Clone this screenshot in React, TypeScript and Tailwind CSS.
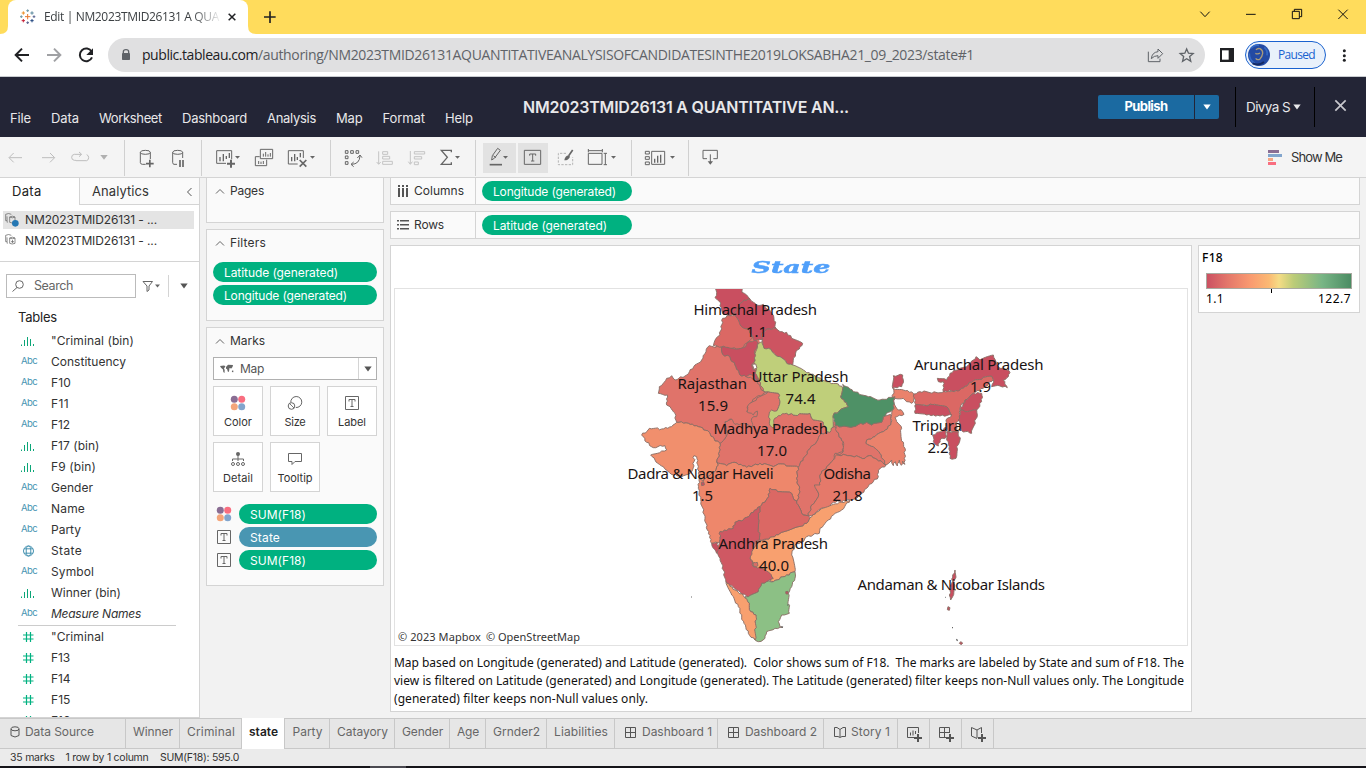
import React, { useLayoutEffect, useRef, useState } from "react";

type Kids = { children?: React.ReactNode };

/* Text set to a given width through letter spacing */
function Fit({ w, c = "", children }: { w: number; c?: string; children: string }) {
  const ref = useRef<HTMLSpanElement>(null);
  const [ls, setLs] = useState(0);
  useLayoutEffect(() => {
    const el = ref.current;
    if (!el) return;
    setLs((w - el.getBoundingClientRect().width) / children.length);
  }, []);
  return (
    <span ref={ref} className={"inline-block shrink-0 whitespace-pre " + c} style={{ letterSpacing: ls }}>
      {children}
    </span>
  );
}

/* Icon window drawn on a grid three times finer than the pixel grid */
function Ico({ x, y, w, h, c = "", ox = 0, oy = 0, children }: Kids & { x: number; y: number; w: number; h: number; c?: string; ox?: number; oy?: number }) {
  return (
    <svg width={w} height={h} viewBox={`${x * 3} ${y * 3} ${w * 3} ${h * 3}`} className={"block shrink-0 " + c} fill="none" stroke="#666" strokeWidth="3">
      <g transform={`translate(${ox * 3} ${oy * 3})`}>{children}</g>
    </svg>
  );
}

const Caret = ({ c = "" }: { c?: string }) => (
  <svg width="8" height="6" viewBox="0 0 8 6" className={"shrink-0 " + c} fill="currentColor"><path d="M0.3 0.5h7.400L4 5.500z" /></svg>
);

function Tool({ x, w, o = false, c = "", children }: Kids & { x: number; w: number; o?: boolean; c?: string }) {
  return <Ico x={x} y={137} w={w} h={40} c={c} ox={o ? 400 : 0} oy={o ? 75 : 0}>{children}</Ico>;
}

/* ---------- Browser frame ---------- */
const sparkle: [number, number, number, string][] = [
  [83, 50, 8, "#e8762d"], [70, 39, 5, "#eb9129"], [96, 39, 5, "#59879b"], [70, 62, 5, "#c72037"], [96, 62, 5, "#1f447e"],
  [83, 32, 4, "#7199a6"], [83, 68, 4, "#5b6591"], [64, 50, 4, "#7199a6"], [102, 50, 4, "#5b6591"],
];

function Browser() {
  return (
    <div className="font-['Open_Sans','Noto_Sans',sans-serif]">
      <div className="flex h-[34px] bg-[#ffdc5c]">
        <Ico x={0} y={26} w={8} h={8} c="mt-[26px]"><path d="M0 102H24V78Q24 102 0 102Z" fill="#fff" stroke="none" /></Ico>
        <div className="flex w-60 items-center rounded-t-lg bg-white">
          <Ico x={19} y={8} w={18} h={18} c="ml-[11px]">
            {sparkle.map(([x, y, r, k], i) => <path key={i} d={`M${x - r} ${y}h${2 * r}M${x} ${y - r}v${2 * r}`} stroke={k} />)}
          </Ico>
          <span className="ml-[7px] w-[176px] overflow-hidden text-xs text-[#3c4043] [mask-image:linear-gradient(90deg,#000_148px,transparent_178px)]">
            <Fit w={175}>Edit | NM2023TMID26131 A QUA</Fit>
          </span>
          <Ico x={226} y={11} w={12} h={12} c="ml-[6px]"><path d="M686 41l20 20M706 41l-20 20" stroke="#202124" strokeWidth="4.500" /></Ico>
        </div>
        <Ico x={248} y={26} w={8} h={8} c="mt-[26px]"><path d="M768 102H744V78Q744 102 768 102Z" fill="#fff" stroke="none" /></Ico>
        <Ico x={262} y={9} w={16} h={16} c="ml-[6px] mt-[9px]"><path d="M792 51h35M810 34v35" stroke="#222" strokeWidth="5" /></Ico>
        <Ico x={1190} y={0} w={176} h={34} c="ml-auto" ox={966}>
          <path d="M703 35l14 15 14-15M840 43h29M985 34V28h22v22h-6M979 34h21v22h-21zM1117 29l28 28M1145 29l-28 28" stroke="#111" />
        </Ico>
      </div>
      <div className="flex h-[43px] items-center border-b border-[#c9ccd0] bg-white">
        <Ico x={0} y={34} w={108} h={42}>
          <path d="M87 165H47M66 146L47 165l19 19" stroke="#202124" strokeWidth="6" />
          <path d="M141 165h40M162 146l19 19-19 19" stroke="#a0a1a4" strokeWidth="6" />
          <path d="M275 155A19 19 0 1 0 276 172" stroke="#202124" strokeWidth="6" /><path d="M279 145v20h-20z" fill="#202124" stroke="none" />
        </Ico>
        <div className="flex h-[34px] w-[1097px] items-center rounded-full bg-[#e0e0e1]">
          <Ico x={120} y={46} w={12} h={18} c="ml-3"><rect x="366" y="159" width="24" height="21" rx="2" fill="#5f6368" stroke="none" /><path d="M370 159v-4q0-6 8-6t8 6v4" stroke="#5f6368" strokeWidth="4" /></Ico>
          <span className="-mt-px ml-[10px] flex text-[14px]">
            <Fit w={116} c="text-[#202124]">public.tableau.com</Fit>
            <Fit w={716} c="text-[#5f6368]">/authoring/NM2023TMID26131AQUANTITATIVEANALYSISOFCANDIDATESINTHE2019LOKSABHA21_09_2023/state#1</Fit>
          </span>
          <Ico x={1145} y={38} w={52} h={34} c="ml-auto mr-2" ox={966}>
            <path d="M547 155v30h35v-9M590 161l-14-14v8q-18 2-20 21 8-9 20-9v8z" stroke="#5f6368" />
            <path d="M662 147l5.500 12.500 14 1.200-10.500 9 3.300 14-12.300-7.500-12.300 7.500 3.300-14-10.500-9 14-1.200z" stroke="#5f6368" strokeWidth="4" />
          </Ico>
        </div>
        <Ico x={1220} y={47} w={15} h={16} c="ml-[15px]" ox={966}><path d="M764 146h38v38h-38z" fill="#202124" stroke="#202124" strokeWidth="4" /><path d="M768 151h20v28h-20z" fill="#fff" stroke="none" /></Ico>
        <div className="ml-[10px] flex h-7 w-[81px] items-center rounded-full border border-[#1a62cf] bg-[#e9f1fb]">
          <Ico x={1247} y={43} w={24} h={24} c="ml-px" ox={966}>
            <circle cx="879" cy="165" r="33" fill="#234aa3" stroke="none" />
            <path d="M855 145q10-12 24-9M850 160q-1 18 16 30M895 142q11 10 8 24" stroke="#356bc6" strokeWidth="5" />
            <path d="M870 150q4-6 12-4 9 5 8 14t-9 18q-8 3-12-3M868 160q8 4 14-1" stroke="#a99b7b" strokeWidth="4" />
            <path d="M860 190q18 8 34-4" stroke="#142a63" strokeWidth="6" />
          </Ico>
          <Fit w={37} c="ml-[7px] text-xs text-[#1a62cf]">Paused</Fit>
        </div>
        <Ico x={1340} y={47} w={10} h={16} c="ml-[14px]" ox={966}><g fill="#202124" stroke="none"><circle cx="1135" cy="152" r="4.500" /><circle cx="1135" cy="167" r="4.500" /><circle cx="1135" cy="181" r="4.500" /></g></Ico>
      </div>
    </div>
  );
}

/* ---------- Tableau header ---------- */
const menus: [string, number][] = [["File", 21], ["Data", 28], ["Worksheet", 63], ["Dashboard", 65], ["Analysis", 49], ["Map", 26.5], ["Format", 42.5], ["Help", 28]];

function Header() {
  return (
    <div className="flex h-[60px] bg-[#232536] text-[#e8e8ea]">
      <div className="ml-[10px] mt-[33px] flex h-[18px] w-[463px] items-center gap-5 text-[13px]">
        {menus.map(([t, w]) => <Fit key={t} w={w}>{t}</Fit>)}
      </div>
      <Fit w={326} c="ml-[50px] mt-[18px] text-[16px] leading-6 font-semibold">NM2023TMID26131 A QUANTITATIVE AN...</Fit>
      <div className="ml-auto mt-[18px] flex h-6 w-[121px] overflow-hidden rounded-xs font-bold text-white">
        <div className="flex w-24 items-center justify-center bg-[#1b6aa1] text-[13px]"><Fit w={43}>Publish</Fit></div>
        <div className="ml-px flex w-6 items-center justify-center bg-[#1b6aa1]"><Caret /></div>
      </div>
      <div className="ml-4 mt-[10px] flex h-10 w-20 items-center border-x border-black pl-[10px] text-[13.500px]">
        <Fit w={44}>Divya S</Fit><Caret c="ml-[3px]" />
      </div>
      <Ico x={1334} y={98} w={14} h={15} c="ml-[19px] mr-[18px] mt-[21px]" ox={966}><path d="M1108 301l31 31M1139 301l-31 31" stroke="#c8c8cd" strokeWidth="5" /></Ico>
    </div>
  );
}

/* ---------- Toolbar ---------- */
const Sep = () => <div className="mt-[3px] h-9 w-px shrink-0 bg-[#d0d0d0]" />;

function Toolbar() {
  return (
    <div className="flex h-[41px] border-b border-[#d4d4d4] bg-[#f4f4f4]">
      <Tool x={0} w={124}>
        <path d="M66 473H28M41 459l-14 14 14 14M126 473h37M150 459l14 14-14 14M243 463h-20q-8 1-8 9t8 9h5M228 482h32q6-2 6-9t-6-9M237 456l8 7-8 7" stroke="#bdbdbd" />
        <path d="M301 465h22l-11 14z" fill="#b0b0b0" stroke="none" />
      </Tool>
      <Sep />
      <Tool x={125} w={76}>
        <path d="M437 493h-10q-6-1-6-5v-31M451 457v20" /><ellipse cx="436" cy="457" rx="15" ry="6" /><path d="M438 491h23M449.500 479v23" strokeWidth="5" />
        <path d="M531 493h-9q-4-1-4-5v-31M548 457v17" /><ellipse cx="533" cy="457" rx="15" ry="6" /><path d="M540 480v21M549 480v21" strokeWidth="5" />
      </Tool>
      <Sep />
      <Tool x={202} w={128}>
        <path d="M678 490h-28v-38h45v26" /><path d="M660 484v-13M670 484v-22M679 477v-9M688 474v-15" strokeWidth="4" /><path d="M681 491h24M693 479v24" strokeWidth="6" /><path d="M705 468h15l-7.500 8z" fill="#666" stroke="none" />
        <path d="M781 448h37v28h-37zM779 470h-13v27h34v-18" /><path d="M790 470v-9M797 470v-14M804 470v-7M811 470v-11M776 492v-9M783 492v-7M790 492v-9" />
        <path d="M893 492h-28v-40h45v22" /><path d="M875 484v-13M884 484v-22M892 480v-9M901 472v-13" strokeWidth="4" /><path d="M899 480l20 20M919 480l-20 20" strokeWidth="5" /><path d="M930 468h15l-7.500 8z" fill="#666" stroke="none" />
      </Tool>
      <Sep />
      <Tool x={331} w={144}>
        <path d="M1036 452h8v8h-8zM1052 452h8v8h-8zM1068 452h8v8h-8zM1036 468h8v8h-8zM1036 485h8v8h-8zM1054 493q25 0 26-26M1072 474l8-9 6 8M1061 486l-8 7 8 7" />
        <g stroke="#c4c4c4"><path d="M1136 454v38M1130 486l6 7 6-7M1148 455h15v8h-15zM1148 469h21v8h-21zM1148 484h29v9h-29z" /></g>
        <g transform="translate(1200 225)"><path d="M31 228v38M25 260l6 8 6-8M43 230h31v7H43zM43 245h22v7H43zM43 261h12v8H43z" stroke="#c4c4c4" />
          <path d="M154 232v-6h-30l18 21-18 21h30v-6" strokeWidth="4" /><path d="M165 243h15l-7.500 8z" fill="#666" stroke="none" /></g>
      </Tool>
      <Sep />
      <Tool x={476} w={155} o>
        <path d="M249 204h99v90h-99zM354 204h90v90h-90z" fill="#e2e2e2" stroke="none" />
        <path d="M275 255l2-13 16-22 8 6-17 23zM280 242l8 6" /><path d="M269 269h37" strokeWidth="5" /><path d="M309 243h15l-7.500 8z" fill="#666" stroke="none" />
        <path d="M373 226h49v42h-49zM389 242v-5h18v5M398 237v21M393 258h10" />
        <path d="M498 235h-23v34h43v-23" stroke="#b4b4b4" strokeDasharray="7 4" /><path d="M518 225l-12 17" strokeWidth="5" /><path d="M506 241q-11 2-13 15 13 0 17-11z" fill="#666" stroke="none" />
        <path d="M565 235h41v33h-41zM565 227h42M565 222v10M607 222v10M616 235v34M611 235h10M611 269h10" /><path d="M633 243h15l-7.500 8z" fill="#666" stroke="none" />
      </Tool>
      <Sep />
      <Tool x={632} w={56} o>
        <path d="M736 229h12v8h-12zM736 245h12v8h-12zM736 261h12v8h-12zM755 229h39v39h-39z" /><path d="M764 263v-12M773 263v-21M782 263v-24" strokeWidth="4" /><path d="M810 243h15l-7.500 8z" fill="#666" stroke="none" />
      </Tool>
      <Sep />
      <Tool x={689} w={40} o><path d="M921 251h-12v-25h43v25h-12M931 238v28" /><path d="M923 259h16l-8 10z" fill="#666" stroke="none" /></Tool>
      <div className="ml-auto mr-[24px] flex items-center">
        <Ico x={1268} y={147} w={16} h={20} ox={966}>
          <g stroke="none"><path d="M906 450h33v9h-33z" fill="#8a6d93" /><path d="M906 462h42v9h-42z" fill="#82a5cd" /><path d="M906 474h15v9h-15z" fill="#f4a582" /><path d="M906 486h24v9h-24z" fill="#f96e80" /></g>
        </Ico>
        <Fit w={51} c="ml-[7px] mt-[2px] text-[13px] text-[#333]">Show Me</Fit>
      </div>
    </div>
  );
}

/* ---------- Data pane ---------- */
const fields: [string, string, number][] = [
  ["b", '"Criminal (bin)', 83], ["a", "Constituency", 75], ["a", "F10", 20], ["a", "F11", 18], ["a", "F12", 19], ["b", "F17 (bin)", 48.5], ["b", "F9 (bin)", 45],
  ["a", "Gender", 42], ["a", "Name", 34], ["a", "Party", 30], ["g", "State", 31], ["a", "Symbol", 43], ["b", "Winner (bin)", 70], ["a", "Measure Names", 90],
];
const measures: [string, number][] = [['"Criminal', 53], ["F13", 19], ["F14", 19.5], ["F15", 19.5], ["F16", 19.5]];

function FieldIcon({ k }: { k: string }) {
  if (k === "a") return <Fit w={16} c="text-[9.500px] text-[#4994b2]">Abc</Fit>;
  if (k === "b") return <svg width="16" height="12" viewBox="0 0 16 12" stroke="#0ca678" className="block"><path d="M.5 9.500v1.500M3.500 5v6M6.500 2v9M9.500 4v7M12.500 9v2" /></svg>;
  if (k === "g") return <svg width="16" height="12" viewBox="0 0 16 12" stroke="#4994b2" fill="none" className="block"><circle cx="7.500" cy="6" r="5" /><ellipse cx="7.500" cy="6" rx="2.300" ry="5" /><path d="M3 3.800h9M3 8.200h9" /></svg>;
  return <svg width="16" height="12" viewBox="0 0 16 12" stroke="#00b180" fill="none" className="block"><path d="M5.500 1v10M9.500 1v10M2 4h10.500M2 8h10.500" strokeWidth="1.200" /></svg>;
}

const Sheets = ({ dot = false }: { dot?: boolean }) => (
  <Ico x={5} y={dot ? 213 : 234} w={14} h={14} oy={175}>
    <g transform={dot ? "" : "translate(0 63)"}>
      <path d="M21 137h-4v-19q9-5 17 0M22 143q-1-1-1-19M29 126q8-5 16 0M29 126v16q7 4 16 0v-16q-8 5-16 0" strokeWidth="2.200" />
      {dot ? <circle cx="46" cy="145" r="10" fill="#2477b3" stroke="none" /> : <path d="M33 137h9M37.500 132v9" strokeWidth="2.200" />}
    </g>
  </Ico>
);

function DataPane() {
  return (
    <div className="h-[540px] w-[200px] shrink-0 overflow-hidden border-r border-b border-[#d4d4d4] bg-white text-xs text-[#333]">
      <div className="flex h-[27px] text-[13px]">
        <div className="flex w-[79px] items-center pl-3 pt-px text-[#222]"><Fit w={29.5}>Data</Fit></div>
        <div className="flex flex-1 items-center border-b border-l border-[#d4d4d4] bg-[#fafafa] pl-[12px] pt-px">
          <Fit w={57}>Analytics</Fit>
          <svg width="7" height="10" viewBox="0 0 7 10" className="ml-auto mr-[6px]" fill="none" stroke="#555"><path d="M5.500 1L1.500 5l4 4" /></svg>
        </div>
      </div>
      <div className="mt-[6px] h-[51px] border-b border-[#d4d4d4]">
        <div className="ml-[3px] flex h-[18px] w-[191px] items-center bg-[#e4e4e4] pl-[2px]"><Sheets dot /><Fit w={132} c="ml-[6px]">NM2023TMID26131 - ...</Fit></div>
        <div className="ml-[3px] mt-[3px] flex h-[18px] w-[191px] items-center pl-[2px]"><Sheets /><Fit w={132} c="ml-[6px]">NM2023TMID26131 - ...</Fit></div>
      </div>
      <div className="mt-3 flex h-6 items-center">
        <div className="ml-[6px] flex h-6 w-[130px] items-center border border-[#bbb] pl-[5px] text-[#666]">
          <svg width="12" height="12" viewBox="0 0 12 12" fill="none" stroke="#666"><circle cx="7.500" cy="4.500" r="3.800" /><path d="M5 7.500L.5 11.500" /></svg>
          <Fit w={39} c="ml-[10px] text-[12.500px]">Search</Fit>
        </div>
        <svg width="19" height="12" viewBox="0 0 19 12" fill="none" stroke="#666" className="ml-[6px]"><path d="M1 1.500h9.500L7 6v4l-2 1.500V6z" /><path d="M13 4.500h5l-2.500 3z" fill="#666" stroke="none" /></svg>
        <div className="ml-[7px] h-[22px] w-px bg-[#d4d4d4]" />
        <Caret c="ml-[11px] text-[#555]" />
      </div>
      <div className="mt-[10px] flex h-5 items-center pl-[18px] text-[13px] text-[#222]"><Fit w={39}>Tables</Fit></div>
      <div className="mt-[2px]">
        {fields.map(([k, t, w], i) => (
          <div key={t} className="flex h-[21px] items-center pl-[21px]">
            <div className="flex w-[30px] items-center"><FieldIcon k={k} /></div>
            <Fit w={w} c={i === 13 ? "italic" : ""}>{t}</Fit>
          </div>
        ))}
      </div>
      <div className="ml-[18px] w-[158px] border-b border-[#ccc] pt-px" />
      {measures.map(([t, w]) => (
        <div key={t} className="flex h-[21px] items-center pl-[21px]">
          <div className="flex w-[30px] items-center"><FieldIcon k="m" /></div>
          <Fit w={w}>{t}</Fit>
        </div>
      ))}
    </div>
  );
}

/* ---------- Shelves ---------- */
function Pill({ t, w, c }: { t: string; w: number; c: string }) {
  return <div className={"flex h-5 items-center rounded-full pl-[11px] pt-px text-xs text-white " + c}><Fit w={w}>{t}</Fit></div>;
}

function CardTitle({ t, w }: { t: string; w: number }) {
  return (
    <div className="flex h-[26px] items-center pl-2 text-[#333]">
      <svg width="10" height="7" viewBox="0 0 10 7" fill="none" stroke="#666"><path d="M1 5.500l4-4 4 4" /></svg>
      <Fit w={w} c="ml-[5px]">{t}</Fit>
    </div>
  );
}

const Dots = () => (
  <svg width="16" height="16" viewBox="0 0 16 16" className="block shrink-0"><circle cx="4.300" cy="4.300" r="3.500" fill="#8a6d93" /><circle cx="11.700" cy="4.300" r="3.500" fill="#f96e80" /><circle cx="4.300" cy="11.700" r="3.500" fill="#f4a57a" /><circle cx="11.700" cy="11.700" r="3.500" fill="#82a5cd" /></svg>
);
const Tee = () => (
  <svg width="16" height="16" viewBox="0 0 16 16" className="block shrink-0" fill="none" stroke="#666"><path d="M1.500 1.500h13v13h-13z" /><path d="M5 6.500v-2h6v2M8 4.500v7M6.500 11.500h3" /></svg>
);
const SizeIcon = () => (
  <svg width="16" height="16" viewBox="0 0 16 16" className="block" fill="none" stroke="#666"><path d="M3.800 7.500a5.500 5.500 0 1 1 5 5" /><circle cx="4.500" cy="11" r="3.300" /><path d="M2.500 8.500l4.500 4.500" strokeWidth=".9" /></svg>
);
const DetailIcon = () => (
  <svg width="16" height="16" viewBox="0 0 16 16" className="block" fill="none" stroke="#666"><circle cx="8" cy="3" r="2" fill="#666" stroke="none" /><path d="M8 4v6M2.500 10V8h11v2" /><circle cx="3" cy="13" r="1.500" /><circle cx="8" cy="13" r="1.500" /><circle cx="13" cy="13" r="1.500" /></svg>
);
const TipIcon = () => (
  <svg width="16" height="16" viewBox="0 0 16 16" className="block" fill="none" stroke="#666"><path d="M1.500 2.500h13v8H8l-3 3v-3H1.500z" /></svg>
);
const markButtons: [string, number, React.ReactNode][] = [
  ["Color", 28, <Dots />], ["Size", 21, <SizeIcon />], ["Label", 28, <Tee />], ["Detail", 30, <DetailIcon />], ["Tooltip", 35, <TipIcon />],
];

const card = "border border-[#d4d4d4] bg-[#fafafa] px-[6px]";

function Cards() {
  return (
    <div className="ml-[6px] w-[178px] shrink-0 text-xs">
      <div className={card + " h-[46px] !px-0"}><CardTitle t="Pages" w={34} /></div>
      <div className={card + " mt-[6px] h-[92px]"}>
        <div className="-mx-[6px]"><CardTitle t="Filters" w={36} /></div>
        <div className="mt-[6px] flex flex-col gap-[3px]">
          <Pill t="Latitude (generated)" w={114} c="bg-[#00b180]" />
          <Pill t="Longitude (generated)" w={123} c="bg-[#00b180]" />
        </div>
      </div>
      <div className={card + " mt-[6px] h-[259px]"}>
        <div className="-mx-[6px]"><CardTitle t="Marks" w={35} /></div>
        <div className="mt-[3px] flex h-[23px] items-center border border-[#b0b0b0] bg-white pl-[6px] text-[#555]">
          <svg width="14" height="10" viewBox="0 0 14 10" fill="#666"><path d="M0 2l4-.5 1.500.8L4 4.500l.7 1.500L4.500 9 3.300 8 3 5.500 1 3.800zM6 3l2-2.200L13 1l-.5 2-1.200 1.500L9.500 4 9 7.500 8 8 7 5 6 4.800zM12 6.500l1.500.2-.3 1.500-1.300-.3z" /></svg>
          <Fit w={24} c="ml-[6px]">Map</Fit>
          <div className="ml-auto flex h-full w-[18px] items-center justify-center border-l border-[#d4d4d4]"><Caret /></div>
        </div>
        <div className="mt-[6px] grid grid-cols-[50px_50px_50px] gap-x-[7px] gap-y-[6px]">
          {markButtons.map(([t, w, icon]) => (
            <div key={t} className="flex h-[50px] flex-col items-center border border-[#d4d4d4] bg-white pt-2 text-[11px] text-[#333]">
              {icon}<Fit w={w} c="mt-[3px] leading-4">{t}</Fit>
            </div>
          ))}
        </div>
        <div className="mt-3 flex flex-col gap-[3px]">
          {([["SUM(F18)", 56, "flex-1 bg-[#00b180]"], ["State", 30, "flex-1 bg-[#4996b2]"], ["SUM(F18)", 56, "flex-1 bg-[#00b180]"]] as [string, number, string][]).map(([t, w, c], i) => (
            <div key={i} className="flex items-center pl-[3px]">
              {i ? <Tee /> : <Dots />}
              <div className="ml-[7px] flex flex-1"><Pill t={t} w={w} c={c} /></div>
            </div>
          ))}
        </div>
      </div>
    </div>
  );
}

function Shelf({ t, w, pill, pw, rows = false }: { t: string; w: number; pill: string; pw: number; rows?: boolean }) {
  return (
    <div className="flex h-[28px] border border-[#d4d4d4] bg-[#fafafa] text-xs">
      <div className="flex w-[85px] items-center border-r border-[#d4d4d4] pl-[6px] text-[#333]">
        <svg width="12" height="12" viewBox="0 0 12 12" fill="#555">
          {rows ? <path d="M0 1h2v1.500H0zM3 1h9v1.500H3zM0 5h2v1.500H0zM3 5h9v1.500H3zM0 9h2v1.500H0zM3 9h9v1.500H3z" /> : <path d="M1 0h2v2H1zM1 3h2v9H1zM5 0h2v2H5zM5 3h2v9H5zM9 0h2v2H9zM9 3h2v9H9z" />}
        </svg>
        <Fit w={w} c="ml-[5px]">{t}</Fit>
      </div>
      <div className="ml-[6px] mt-[3px]"><Pill t={pill} w={pw} c="w-[150px] bg-[#00b180]" /></div>
    </div>
  );
}

/* ---------- Map ---------- */
const R = "#c94f60", S = "#e0736a", D = "#db6864", O = "#f8a06f";
const interior = "345,100 415,150 425,200 425,300 460,380 640,410 800,400 760,450 745,470 785,525 640,640 560,700 520,740 500,850 450,870 402,1000 380,930 325,860 255,600 240,545 290,490 200,420 165,380 165,300 210,285 270,200 300,170";
const states: [string, string][] = [
  [S, "445,320 475,325 480,350 470,378 500,385 520,390 570,385 575,400 610,412 622,440 600,450 590,470 570,490 550,520 535,547 475,537 460,545 420,535 380,547 345,532 320,542 290,530 298,500 300,475 318,455 322,440 315,415 335,402 370,415 385,405 380,360"],
  [S, "268,182 305,187 308,208 330,215 345,240 360,270 378,275 412,285 412,295 430,318 445,320 410,335 385,360 380,380 400,390 412,378 410,395 395,400 398,425 370,415 345,418 335,402 315,410 320,440 315,460 300,475 285,468 268,442 235,425 205,415 170,412 165,385 150,365 140,360 142,330 115,325 118,305 140,280 155,272 165,285 200,270 225,240 245,225 258,200"],
  [D, "345,90 358,108 365,125 385,132 398,155 385,170 365,190 355,192 305,185 280,182 288,160 300,150 308,100 330,92"],
  [R, "283,8 290,22 285,38 300,50 300,62 310,88 345,90 358,60 372,45 390,42 380,30 366,22 368,8"],
  [R, "372,45 390,42 410,60 430,58 455,85 462,100 468,130 440,132 425,145 427,165 405,168 395,150 385,130 365,125 355,105 345,90 358,60"],
  [R, "305,187 355,192 370,188 388,170 405,165 414,172 405,195 405,230 395,240 400,255 412,262 415,285 390,268 378,275 360,270 345,240 330,215 308,208"],
  ["#cd5461", "427,165 425,145 440,132 468,130 480,140 500,142 515,160 548,175 528,200 518,240 500,235 480,215 462,205 445,190 432,190"],
  ["#f18f6d", "170,412 205,415 235,425 268,442 285,468 300,475 298,500 290,530 295,540 285,560 262,575 250,590 238,580 235,545 230,515 222,512 222,530 215,560 185,575 160,570 130,545 105,525 92,510 112,505 140,495 135,482 100,488 80,472 65,450 88,430 125,432 155,425"],
  ["#ee876b", "238,580 250,590 262,575 285,560 295,540 290,530 320,542 345,532 380,547 420,535 460,545 475,537 535,547 530,580 540,620 530,655 515,625 480,620 450,610 442,640 425,660 420,665 390,690 370,705 345,712 340,730 300,740 300,770 275,775 262,735 255,700 243,650 235,610"],
  [S, "645,425 650,440 670,470 668,500 645,505 640,525 620,545 600,570 600,600 590,615 595,635 575,660 565,693 545,685 530,655 540,620 530,580 535,547 550,520 570,490 590,470 600,450 622,440"],
  [S, "645,420 665,425 700,425 740,412 755,420 785,412 790,395 812,388 812,420 790,440 765,455 740,465 738,475 760,485 780,505 798,540 765,520 748,512 735,520 690,512 650,510 670,500 670,470 650,440"],
  ["#e5796a", "650,510 690,512 735,520 748,512 765,520 798,540 775,555 775,575 760,590 740,610 715,635 690,645 640,652 630,665 600,672 575,692 565,693 575,660 595,635 590,615 583,600 600,600 600,570 620,545 640,525"],
  ["#ea826c", "820,310 850,315 880,325 885,335 875,355 860,350 850,340 825,340 822,355 830,370 848,380 852,388 825,397 835,415 845,430 843,455 855,490 855,538 848,528 844,541 838,525 832,543 826,530 820,542 815,525 798,540 780,505 760,485 738,475 740,465 765,455 790,440 812,420 815,388 822,370 818,345"],
  [O, "418,768 440,762 480,745 525,728 560,715 570,698 600,675 640,658 690,645 665,675 640,690 625,705 600,730 598,745 560,755 550,770 525,780 515,810 525,860 500,870 460,890 450,888 458,878 430,855 400,845 390,810 405,785"],
  [D, "450,610 480,620 515,625 530,655 545,685 570,698 560,715 525,728 480,745 440,762 418,765 415,700 420,665 425,660 442,640"],
  ["#cf5863", "420,665 415,700 418,765 405,770 395,800 390,820 400,845 425,850 450,865 460,880 440,890 425,895 415,920 385,935 350,915 318,890 310,855 300,820 290,800 298,770 300,740 340,730 345,712 370,705 390,690"],
  [R, "275,775 292,772 298,790 290,805 280,790"],
  ["#8cc085", "525,860 525,880 515,905 505,925 508,985 485,990 475,1010 480,1025 488,1027 465,1030 440,1040 435,1060 415,1070 402,1060 408,990 392,980 388,955 375,935 385,935 415,920 425,895 440,890 460,890 500,870"],
  [O, "318,890 345,915 370,932 388,955 392,980 408,990 405,1065 385,1045 372,1015 355,965 335,930"],
  ["#bfcf7a", "412,180 425,170 432,190 445,190 462,205 480,215 500,235 518,240 550,255 590,275 620,290 655,297 668,310 662,335 685,365 660,375 640,390 640,420 630,442 620,440 610,412 575,400 570,385 520,390 500,385 475,392 464,400 460,430 448,415 447,390 455,375 470,378 480,350 475,325 445,320 430,318 410,270 405,240 405,205"],
  ["#4e9166", "668,298 690,312 700,320 745,335 780,345 825,335 818,375 790,395 785,412 755,420 740,412 700,425 665,425 645,420 640,390 660,375 685,365 662,335 668,310"],
  [R, "820,272 848,270 850,285 845,305 818,310"],
  [D, "882,327 900,320 960,323 1020,315 1060,287 1115,273 1120,283 1090,310 1060,325 1035,345 1020,370 1018,405 1005,415 1015,440 985,440 978,405 995,390 980,365 950,360 900,360 885,365"],
  [R, "970,290 955,290 952,280 980,285 990,265 1020,250 1045,240 1060,225 1068,215 1080,225 1120,210 1128,230 1135,245 1160,255 1170,263 1165,275 1150,285 1162,308 1140,303 1115,305 1120,283 1115,273 1060,287 1020,315 970,320"],
  [R, "885,360 950,360 980,365 995,390 960,393 920,390 885,385"],
  [R, "1022,375 1035,345 1060,325 1085,325 1085,350 1070,375 1035,380"],
  [R, "1022,375 1035,380 1070,375 1072,390 1055,445 1025,437 1015,405"],
  [R, "980,440 1015,440 1020,465 1010,485 1008,520 990,520 988,485 980,465"],
  [R, "938,450 965,440 978,427 980,455 960,465 955,483 940,470"],
  [R, "1005,855 1007,870 1002,895 998,935 992,945 988,930 995,895 998,870"],
  [R, "984,965 990,968 988,976 982,974"],
  [R, "1022,1070 1028,1074 1024,1079 1018,1075"],
  [R, "244,592 252,592 253,600 245,602"],
  ["#d96d67", "400,832 412,832 414,842 402,845"],
  [R, "497,920 504,919 504,927 498,927"],
];

/* Coastlines and borders gain detail through seeded midpoint displacement;
   the seed depends on the end points only, so neighbours share a border. */
function rough(src: string): string {
  const pts = src.split(" ").map((p) => p.split(",").map(Number));
  const out: string[] = [];
  pts.forEach((a, i) => {
    const b = pts[(i + 1) % pts.length];
    const dx = b[0] - a[0], dy = b[1] - a[1], len = Math.hypot(dx, dy);
    out.push(a.join(","));
    const n = Math.floor(len / 6);
    const flip = a[0] * 3 + a[1] > b[0] * 3 + b[1];
    const sgn = flip ? -1 : 1;
    for (let j = 1; j < n; j++) {
      const k = flip ? n - j : j;
      const h = Math.sin((a[0] + b[0]) * 12.9 + (a[1] + b[1]) * 78.2 + k * 37.7) * 43758.5;
      const r = (h - Math.floor(h) - 0.5) * 6 * sgn;
      out.push(`${(a[0] + (dx * j) / n - (dy / len) * r).toFixed(1)},${(a[1] + (dy * j) / n + (dx / len) * r).toFixed(1)}`);
    }
  });
  return out.join(" ");
}

const labels: [string, number, number, number][] = [
  ["Himachal Pradesh", 693.5, 315, 123.5], ["1.1", 746, 337, 21], ["Rajasthan", 677.5, 389, 69.5], ["15.9", 698, 411, 30], ["Uttar Pradesh", 751.5, 382, 97],
  ["74.4", 785.5, 404, 30], ["Madhya Pradesh", 713.5, 434, 114.5], ["17.0", 757, 456, 30], ["Dadra & Nagar Haveli", 627.5, 479, 146], ["1.5", 692, 501, 21],
  ["Odisha", 823.5, 479, 47.5], ["21.8", 832.5, 501, 30], ["Andhra Pradesh", 718.5, 549, 109.5], ["40.0", 759, 571, 30], ["Arunachal Pradesh", 914, 370, 129.5],
  ["1.9", 970, 392, 21], ["Tripura", 912.500, 431, 49.5], ["2.2", 927.5, 453, 21], ["Andaman & Nicobar Islands", 857.5, 590, 187.5],
];

function MapView() {
  return (
    <svg width="792" height="356" viewBox="395 289 792 356" className="block">
      <g transform="translate(620 285) scale(.33333)" stroke="#8b6f66" strokeWidth="2.800" strokeLinejoin="round">
        <polygon points={interior} fill={S} stroke="none" />
        {states.map(([f, p], i) => <polygon key={i} points={rough(p)} fill={f} />)}
        <path d="M397 238l10-1 4 12-9 4z" fill="#fff" />
        <path d="M214 936h2M502 960h3M484 1025l5 2M1003 912l4 4M975 937h2M996 1028h3M1009 1063l4 4" stroke="#666" strokeWidth="4" />
      </g>
      <g fill="#1a1313" className="font-['Noto_Sans',sans-serif] text-[15px]">
        {labels.map(([t, x, y, w]) => <text key={t} x={x} y={y} textLength={w}>{t}</text>)}
      </g>
    </svg>
  );
}

function View() {
  return (
    <div className="h-[467px] w-[802px] border border-[#d4d4d4] bg-white px-[3px] font-['Noto_Sans',sans-serif] text-[#111]">
      <div className="flex h-[42px] items-center justify-center">
        <span className="mt-px inline-block scale-x-[1.58] font-['DejaVu_Serif',serif] text-[17px] font-bold italic text-[#4f9ffa] [-webkit-text-stroke:0.5px_#4f9ffa]">State</span>
      </div>
      <div className="relative h-[358px] border border-[#e2e2e2]">
        <MapView />
        <div className="absolute bottom-0 left-[3px] flex gap-[5px] text-[11px] text-[#333]"><Fit w={83}>© 2023 Mapbox</Fit><Fit w={94}>© OpenStreetMap</Fit></div>
      </div>
      <div className="mt-2 flex flex-col text-xs leading-[18px]">
        <Fit w={790} c="self-start">{"Map based on Longitude (generated) and Latitude (generated).  Color shows sum of F18.  The marks are labeled by State and sum of F18. The"}</Fit>
        <Fit w={790} c="self-start">view is filtered on Latitude (generated) and Longitude (generated). The Latitude (generated) filter keeps non-Null values only. The Longitude</Fit>
        <Fit w={254} c="self-start">(generated) filter keeps non-Null values only.</Fit>
      </div>
    </div>
  );
}

function Legend() {
  return (
    <div className="h-[68px] w-[162px] border border-[#d4d4d4] bg-white font-['Noto_Sans',sans-serif] text-xs text-black">
      <div className="ml-[3px] mt-[3px] h-[18px] leading-[18px]"><Fit w={21} c="font-medium">F18</Fit></div>
      <div className="ml-[7px] mt-[6px] h-4 w-[146px] border border-[#a9a9a0] bg-[linear-gradient(90deg,#cb5162_0%,#e3766a_14%,#f99a70_30%,#fbb973_43%,#f5dc85_50%,#bccc78_60%,#78b585_80%,#4b8c63_100%)]" />
      <div className="ml-[72px] h-1 w-px bg-black" />
      <div className="ml-[7px] mr-[8px] mt-[-3px] flex justify-between leading-[18px]"><Fit w={18}>1.1</Fit><Fit w={33}>122.7</Fit></div>
    </div>
  );
}

/* ---------- Sheet tabs ---------- */
const Grid = () => <svg width="11" height="11" viewBox="0 0 11 11" fill="none" stroke="#555" className="shrink-0"><path d="M.5.5h10v10H.5zM5.500 0v11M0 5.500h11" /></svg>;
const Book = () => <svg width="12" height="12" viewBox="0 0 12 12" fill="none" stroke="#555" className="shrink-0"><path d="M3 1.500H.5v9H4l2 1 2-1h3.500v-9H9M6 11V3.500L3 1.500M6 3.500l3-2" /></svg>;
const plainTabs: [string, number, string][] = [
  ["Winner", 40, "w-[54px]"], ["Criminal", 48, "w-[62px]"], ["state", 29, "w-[43px]"], ["Party", 30, "w-[45px]"], ["Catayory", 51, "w-[65px]"],
  ["Gender", 41, "w-[55px]"], ["Age", 22, "w-[36px]"], ["Grnder2", 47, "w-[61px]"], ["Liabilities", 54, "w-[68px]"],
];
const tab = "flex shrink-0 items-center border-r border-[#c8c8c8] ";

function SheetTabs() {
  return (
    <div className="flex h-[31px] border-y border-[#c8c8c8] bg-[#e6e6e6] text-xs text-[#666]">
      <div className={tab + "w-[126px] pb-[3px] pl-[10px]"}>
        <svg width="10" height="12" viewBox="0 0 10 12" fill="none" stroke="#555"><ellipse cx="5" cy="2.800" rx="4" ry="2" /><path d="M1 3v6.500q4 3 8 0V3" /></svg>
        <Fit w={69} c="ml-[5px]">Data Source</Fit>
      </div>
      {plainTabs.map(([t, w, c]) => (
        <div key={t} className={tab + "justify-center pb-[3px] pl-px " + c + (t === "state" ? " -my-px bg-white font-semibold text-[#222]" : "")}><Fit w={w}>{t}</Fit></div>
      ))}
      <div className={tab + "w-[103px] pb-[3px] pl-[10px]"}><Grid /><Fit w={70} c="ml-[6px]">Dashboard 1</Fit></div>
      <div className={tab + "w-[106px] pb-[3px] pl-[10px]"}><Grid /><Fit w={72} c="ml-[6px]">Dashboard 2</Fit></div>
      <div className={tab + "w-[74px] pb-[3px] pl-[10px]"}><Book /><Fit w={39} c="ml-[5px]">Story 1</Fit></div>
      <div className={tab + "w-[32px] justify-center"}><svg width="16" height="16" viewBox="0 0 16 16" fill="none" stroke="#555"><path d="M8 11.500H1.500v-10h11V7M4.500 9.500v-3M7 9.500v-5M9.500 8V5" /><path d="M8 12h8M12 8v8" strokeWidth="2" /></svg></div>
      <div className={tab + "w-[32px] justify-center"}><svg width="16" height="16" viewBox="0 0 16 16" fill="none" stroke="#555"><path d="M8 11.500H1.500v-10h10V7M6.500 1v10.500M1.500 6.500h10" /><path d="M8 12h8M12 8v8" strokeWidth="2" /></svg></div>
      <div className={tab + "w-[32px] justify-center"}><svg width="16" height="16" viewBox="0 0 16 16" fill="none" stroke="#555"><path d="M7 12V4L1.500 1.500v8.500L7 12.500M7 4l4.500-2.500V7" /><path d="M8 12h8M12 8v8" strokeWidth="2" /></svg></div>
    </div>
  );
}

export default function App() {
  return (
    <div className="flex h-[768px] w-[1366px] flex-col overflow-hidden bg-[#f2f2f2] font-['Inter','Liberation_Sans',sans-serif]">
      <Browser />
      <Header />
      <Toolbar />
      <div className="-mt-px flex h-[541px]">
        <div className="mt-px"><DataPane /></div>
        <Cards />
        <div className="ml-[6px] flex w-[970px] flex-col gap-[6px]">
          <Shelf t="Columns" w={50} pill="Longitude (generated)" pw={123} />
          <Shelf t="Rows" w={30} pill="Latitude (generated)" pw={114} rows />
          <div className="flex justify-between"><View /><Legend /></div>
        </div>
      </div>
      <SheetTabs />
      <div className="flex h-[17px] items-center bg-[#ebebeb] pl-[10px] text-[10.500px] text-[#333]">
        <Fit w={44.5}>35 marks</Fit><Fit w={83} c="ml-[11px]">1 row by 1 column</Fit><Fit w={79} c="ml-[11.500px]">SUM(F18): 595.0</Fit>
      </div>
      <div className="flex-1 bg-[#151419]"><div className="ml-[370px] h-full w-9 bg-[#4a4950]" /></div>
    </div>
  );
}
